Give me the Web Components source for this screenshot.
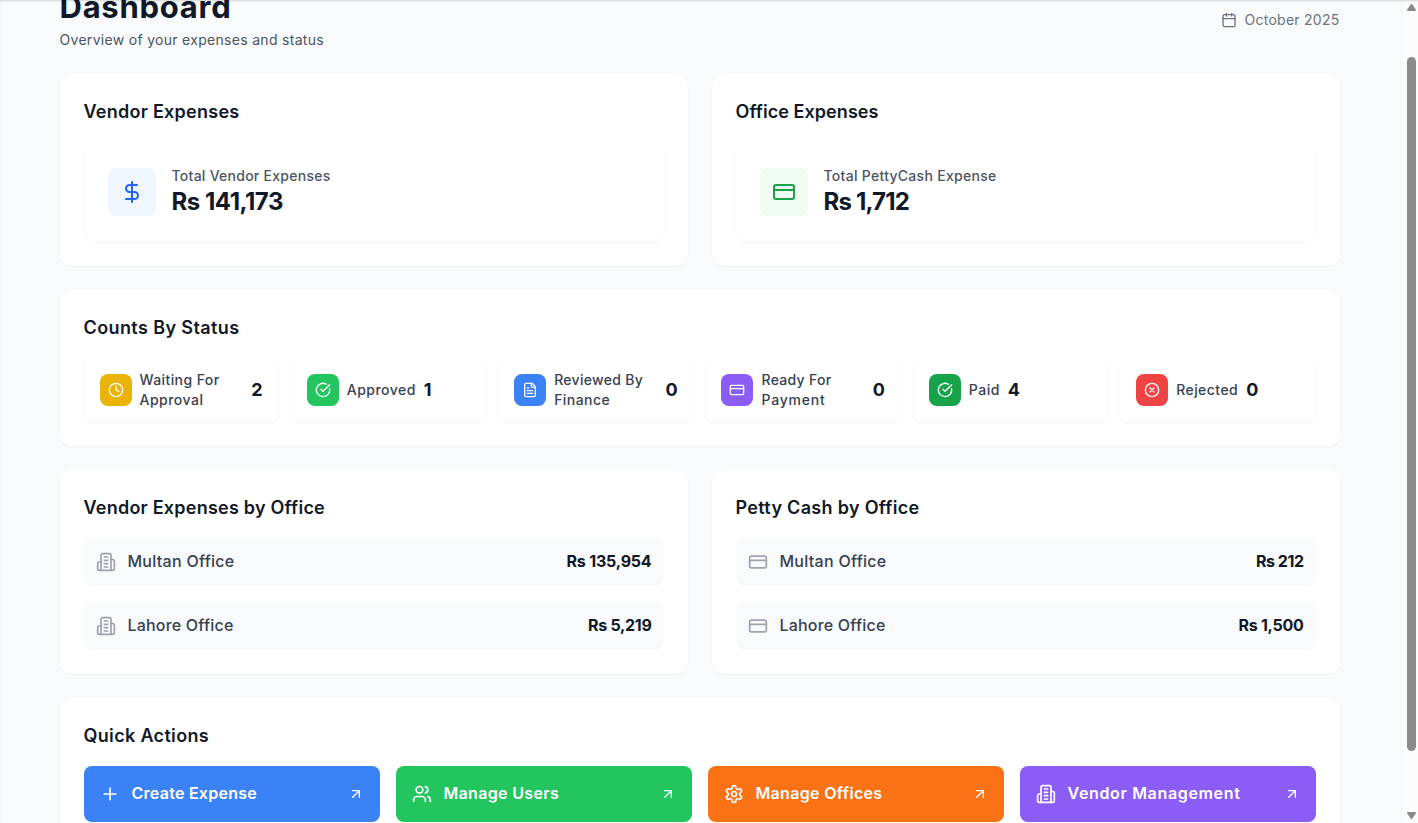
<!DOCTYPE html>
<html lang="en">
<head>
<meta charset="utf-8">
<title>Dashboard</title>
<style>
html,body{margin:0;height:100%;overflow:hidden;background:#f9fafb}
body{font-family:Inter,"Open Sans",sans-serif;color:#111827}
</style>
</head>
<body>
<app-dashboard></app-dashboard>
<script>
const ICONS = {
  dollar:'<path d="M12 2v20M17 5H9.5a3.5 3.5 0 0 0 0 7h5a3.5 3.5 0 0 1 0 7H6"/>',
  card:'<rect width="20" height="14" x="2" y="5" rx="2"/><path d="M2 10h20"/>',
  calendar:'<path d="M8 2v4M16 2v4"/><rect width="18" height="18" x="3" y="4" rx="2"/><path d="M3 10h18"/>',
  clock:'<circle cx="12" cy="12" r="10"/><path d="M12 6v6l4 2"/>',
  check:'<path d="M21.801 10A10 10 0 1 1 17 3.335"/><path d="m9 11 3 3L22 4"/>',
  file:'<path d="M15 2H6a2 2 0 0 0-2 2v16a2 2 0 0 0 2 2h12a2 2 0 0 0 2-2V7Z"/><path d="M14 2v4a2 2 0 0 0 2 2h4M10 9H8M16 13H8M16 17H8"/>',
  cross:'<circle cx="12" cy="12" r="10"/><path d="m15 9-6 6M9 9l6 6"/>',
  building:'<path d="M6 22V4a2 2 0 0 1 2-2h8a2 2 0 0 1 2 2v18Z"/><path d="M6 12H4a2 2 0 0 0-2 2v6a2 2 0 0 0 2 2h2M18 9h2a2 2 0 0 1 2 2v9a2 2 0 0 1-2 2h-2M10 6h4M10 10h4M10 14h4M10 18h4"/>',
  plus:'<path d="M5 12h14M12 5v14"/>',
  users:'<path d="M16 21v-2a4 4 0 0 0-4-4H6a4 4 0 0 0-4 4v2"/><circle cx="9" cy="7" r="4"/><path d="M22 21v-2a4 4 0 0 0-3-3.87M16 3.13a4 4 0 0 1 0 7.75"/>',
  gear:'<path d="M12.22 2h-.44a2 2 0 0 0-2 2v.18a2 2 0 0 1-1 1.73l-.43.25a2 2 0 0 1-2 0l-.15-.08a2 2 0 0 0-2.73.73l-.22.38a2 2 0 0 0 .73 2.73l.15.1a2 2 0 0 1 1 1.72v.51a2 2 0 0 1-1 1.74l-.15.09a2 2 0 0 0-.73 2.73l.22.38a2 2 0 0 0 2.73.73l.15-.08a2 2 0 0 1 2 0l.43.25a2 2 0 0 1 1 1.73V20a2 2 0 0 0 2 2h.44a2 2 0 0 0 2-2v-.18a2 2 0 0 1 1-1.73l.43-.25a2 2 0 0 1 2 0l.15.08a2 2 0 0 0 2.73-.73l.22-.39a2 2 0 0 0-.73-2.73l-.15-.08a2 2 0 0 1-1-1.74v-.5a2 2 0 0 1 1-1.74l.15-.09a2 2 0 0 0 .73-2.73l-.22-.38a2 2 0 0 0-2.73-.73l-.15.08a2 2 0 0 1-2 0l-.43-.25a2 2 0 0 1-1-1.73V4a2 2 0 0 0-2-2z"/><circle cx="12" cy="12" r="3"/>',
  arrow:'<path d="M7 7h10v10M7 17 17 7"/>'
};

const define = (name, render, after) => customElements.define(name, class extends HTMLElement {
  connectedCallback() {
    if (this.shadowRoot) return;
    this.attachShadow({mode:'open'}).innerHTML = render(k => this.getAttribute(k) ?? '');
    if (after) after(this);
  }
});

define('ui-icon', a => `<style>
:host{display:block;flex:none;width:${a('size')||20}px;height:${a('size')||20}px}
svg{display:block;width:100%;height:100%;fill:none;stroke:currentColor;stroke-width:2;stroke-linecap:round;stroke-linejoin:round}
</style><svg viewBox="0 0 24 24" aria-hidden="true">${ICONS[a('name')]}</svg>`);

/* A single-line label tracked to the width given in its w attribute. */
define('ui-text', () => `<style>
:host{display:block;white-space:nowrap}
span{display:inline-block;vertical-align:top}
</style><span><slot></slot></span>`, el => {
  const w = +el.getAttribute('w'), span = el.shadowRoot.querySelector('span');
  if (!w) return;
  const n = el.textContent.length;
  span.style.letterSpacing = (w - span.getBoundingClientRect().width) / n + 'px';
  el.style.width = w + 'px';
});

define('page-header', () => `<style>
:host{display:flex;justify-content:space-between;align-items:center;height:60px;margin-bottom:24px}
.title{font-size:31px;line-height:34px;font-weight:700;margin-bottom:6px}
.sub{font-size:14px;line-height:20px;color:#4b5563}
.date{display:flex;align-items:center;gap:8px;font-size:14px;line-height:20px;color:#6b7280}
</style>
<div><ui-text class="title" w="172">Dashboard</ui-text><ui-text class="sub" w="264.5">Overview of your expenses and status</ui-text></div>
<div class="date"><ui-icon name="calendar" size="16"></ui-icon><ui-text w="95">October 2025</ui-text></div>`);

define('ui-card', a => `<style>
:host{display:block;box-sizing:border-box;background:#fff;border-radius:12px;padding:24px;box-shadow:0 1px 2px rgba(0,0,0,.05)}
.h{font-size:18px;line-height:28px;font-weight:600;margin-bottom:16px}
</style><ui-text class="h" w="${a('w')}">${a('heading')}</ui-text><slot></slot>`);

define('stat-tile', a => `<style>
:host{display:flex;align-items:center;gap:16px;padding:24px;border-radius:12px;background:#fff;box-shadow:0 1px 2px rgba(0,0,0,.05)}
.i{width:48px;height:48px;border-radius:8px;display:grid;place-items:center;background:${a('bg')};color:${a('fg')}}
.l{font-size:14px;line-height:20px;font-weight:500;color:#4b5563}
.v{font-size:24px;line-height:32px;font-weight:700}
</style><div class="i"><ui-icon name="${a('icon')}" size="24"></ui-icon></div>
<div><ui-text class="l" w="${a('lw')}">${a('label')}</ui-text><ui-text class="v" w="${a('vw')}">${a('value')}</ui-text></div>`);

define('status-tile', a => {
  const ws = a('lw').split(',');
  return `<style>
:host{display:flex;align-items:center;gap:8px;height:64px;box-sizing:border-box;padding:12px 16px;border-radius:8px;background:#fff;box-shadow:0 1px 2px rgba(0,0,0,.05)}
.i{flex:none;width:32px;height:32px;border-radius:8px;display:grid;place-items:center;background:${a('bg')};color:#fff}
.l{font-size:14px;line-height:20px;font-weight:500;color:#374151;${ws.length>1?'flex:1':''}}
.v{font-size:18px;line-height:28px;font-weight:700}
</style><div class="i"><ui-icon name="${a('icon')}" size="16"></ui-icon></div>
<div class="l">${a('label').split('|').map((t,i)=>`<ui-text w="${ws[i]}">${t}</ui-text>`).join('')}</div>
<ui-text class="v" w="${a('vw')||12}">${a('value')}</ui-text>`;
});

define('office-row', a => `<style>
:host{display:flex;align-items:center;gap:12px;height:48px;box-sizing:border-box;padding:12px;border-radius:8px;background:#f9fafb;font-size:16px;line-height:22px}
ui-icon{color:#9ca3af}
.n,.v{padding-bottom:2px}
.n{flex:1;color:#374151;font-weight:500}
.v{font-weight:700}
</style><ui-icon name="${a('icon')}"></ui-icon><div class="n"><ui-text w="${a('nw')}">${a('name')}</ui-text></div><ui-text class="v" w="${a('vw')}">${a('value')}</ui-text>`);

define('action-button', a => `<style>
:host{display:flex;align-items:center;gap:12px;height:56px;box-sizing:border-box;padding:16px;border-radius:8px;background:${a('bg')};color:#fff;font-size:16px;line-height:22px;font-weight:600}
.n{flex:1;padding-bottom:2px}
</style><ui-icon name="${a('icon')}"></ui-icon><div class="n"><ui-text w="${a('w')}">${a('label')}</ui-text></div><ui-icon name="arrow" size="16"></ui-icon>`);

define('scroll-rail', () => `<style>
:host{display:flex;flex-direction:column;align-items:center;box-sizing:border-box;width:15px;height:823px;padding:4px 0;background:#fcfcfc;flex:none}
svg{display:block;width:9px;height:7px;fill:#8b8b8b;stroke:#8b8b8b;stroke-width:2;stroke-linejoin:round;margin-left:2px}
i{display:block;width:9px;height:694px;border-radius:5px;background:#8b8b8b;margin:46px 0 61px 2px}
</style><svg viewBox="0 0 9 7"><path d="M4.5 1 8 6H1Z"/></svg><i></i><svg viewBox="0 0 9 7"><path d="M1 1h7L4.5 6Z"/></svg>`);

define('app-dashboard', () => `<style>
:host{display:flex;position:relative;height:823px;overflow:hidden;background:#f9fafb}
main{flex:1;min-width:0;padding-left:59.5px;box-sizing:border-box;background:linear-gradient(90deg,#f5f6f7,#f9fafb 4px)}
.page{width:1280px;margin-top:-10px}
.g2,.g4,.g6,.list{display:grid}
.g2{grid-template-columns:1fr 1fr;gap:24px}
.g4{grid-template-columns:repeat(4,1fr);gap:16px}
.g6{grid-template-columns:repeat(6,1fr);gap:12px}
.list{gap:16px}
.stack{display:grid;gap:24px}
.edge{position:absolute;inset:0 0 auto;height:3px;background:linear-gradient(rgba(0,0,0,.11) 0 1px,rgba(0,0,0,.04) 1px 2px,rgba(0,0,0,.012) 2px)}
</style>
<main><div class="page"><page-header></page-header>
<div class="stack">
<div class="g2">
<ui-card heading="Vendor Expenses" w="156"><stat-tile icon="dollar" bg="#eff6ff" fg="#2563eb" label="Total Vendor Expenses" lw="159" value="Rs 141,173" vw="111.5"></stat-tile></ui-card>
<ui-card heading="Office Expenses" w="143"><stat-tile icon="card" bg="#f0fdf4" fg="#16a34a" label="Total PettyCash Expense" lw="173" value="Rs 1,712" vw="85.5"></stat-tile></ui-card>
</div>
<ui-card heading="Counts By Status" w="156"><div class="g6">
<status-tile icon="clock" bg="#eab308" label="Waiting For|Approval" lw="80,64" value="2" vw="11.5"></status-tile>
<status-tile icon="check" bg="#22c55e" label="Approved" lw="69" value="1" vw="8"></status-tile>
<status-tile icon="file" bg="#3b82f6" label="Reviewed By|Finance" lw="89,56" value="0"></status-tile>
<status-tile icon="card" bg="#8b5cf6" label="Ready For|Payment" lw="70,64" value="0"></status-tile>
<status-tile icon="check" bg="#16a34a" label="Paid" lw="31" value="4"></status-tile>
<status-tile icon="cross" bg="#ef4444" label="Rejected" lw="62" value="0"></status-tile>
</div></ui-card>
<div class="g2">
<ui-card heading="Vendor Expenses by Office" w="241.5"><div class="list">
<office-row icon="building" name="Multan Office" nw="107" value="Rs 135,954" vw="85"></office-row>
<office-row icon="building" name="Lahore Office" nw="106" value="Rs 5,219" vw="63.5"></office-row></div></ui-card>
<ui-card heading="Petty Cash by Office" w="184"><div class="list">
<office-row icon="card" name="Multan Office" nw="107" value="Rs 212" vw="47.5"></office-row>
<office-row icon="card" name="Lahore Office" nw="106" value="Rs 1,500" vw="65"></office-row></div></ui-card>
</div>
<ui-card heading="Quick Actions" w="125.5"><div class="g4">
<action-button icon="plus" bg="#3b82f6" label="Create Expense" w="125.5"></action-button>
<action-button icon="users" bg="#22c55e" label="Manage Users" w="115.5"></action-button>
<action-button icon="gear" bg="#f97316" label="Manage Offices" w="127"></action-button>
<action-button icon="building" bg="#8b5cf6" label="Vendor Management" w="173"></action-button>
</div></ui-card>
</div></div></main>
<scroll-rail></scroll-rail>
<div class="edge"></div>`);
</script>
</body>
</html>
